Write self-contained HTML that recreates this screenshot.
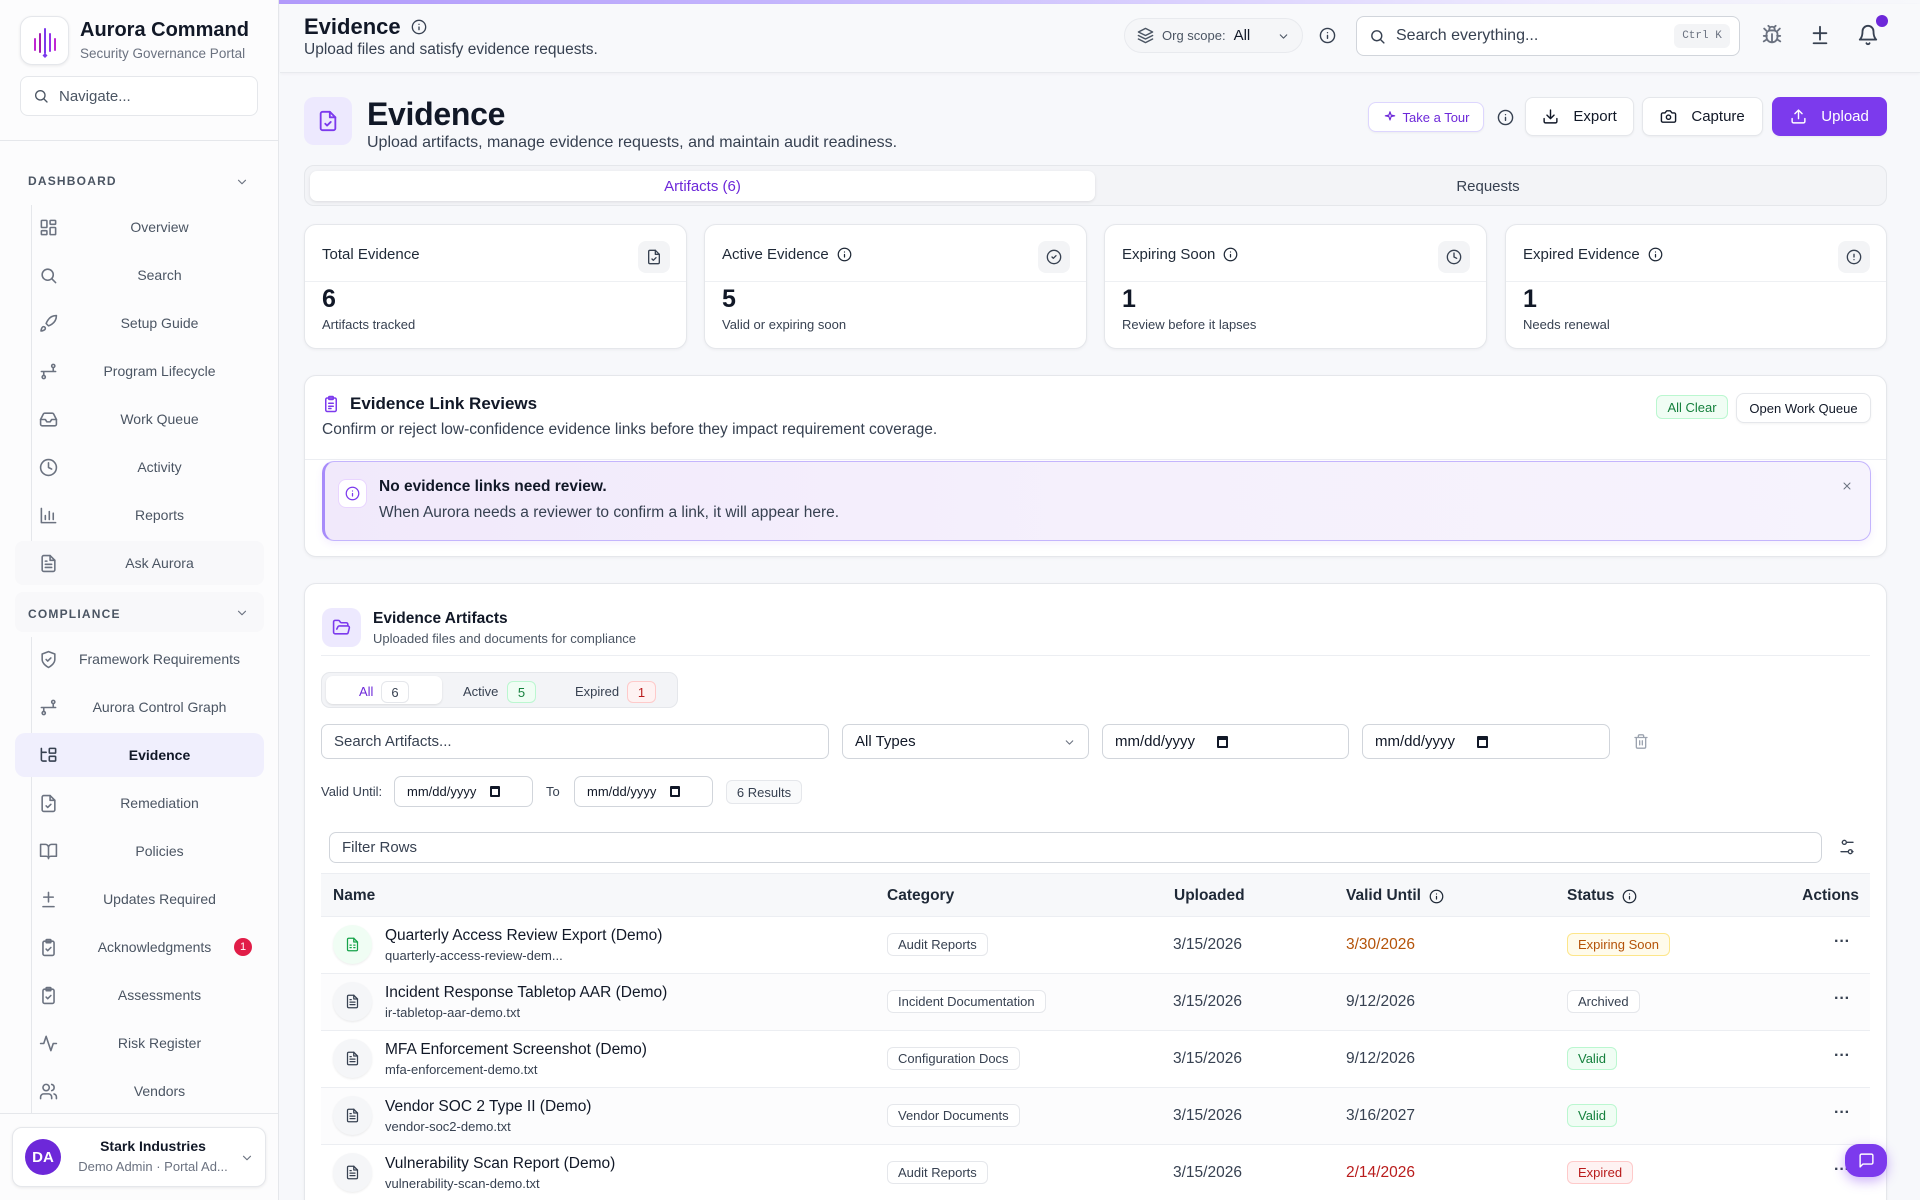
<!DOCTYPE html>
<html style="overflow:hidden;height:1200px"><head><meta charset="utf-8"><style>
*{box-sizing:border-box;margin:0;padding:0}
body{width:1920px;height:1200px;overflow:hidden;font-family:"Liberation Sans",sans-serif;color:#111827;background:#f7f8fb;position:relative}
.a{position:absolute}
svg{display:block}
.ic{fill:none;stroke:currentColor;stroke-width:2;stroke-linecap:round;stroke-linejoin:round}
.side{left:0;top:0;width:279px;height:1200px;background:#fcfcfd;border-right:1px solid #e5e7eb}
.nav{position:absolute;left:31px;width:233px;height:44px;display:flex;align-items:center;color:#4b5563;font-size:14px}
.nav svg{position:absolute;left:8px;width:19px;height:19px;color:#6b7280}
.nav span{width:100%;text-align:center;padding-left:24px}
.sec{position:absolute;left:28px;font-size:12px;letter-spacing:1.2px;color:#4b5563;font-weight:bold}
.card{position:absolute;background:#fff;border:1px solid #e5e7eb;border-radius:12px;box-shadow:0 1px 3px rgba(0,0,0,.05)}
.btn{position:absolute;background:#fff;border:1px solid #e5e7eb;border-radius:8px;display:flex;align-items:center;justify-content:center;gap:10px;font-size:15px;color:#111827;box-shadow:0 1px 2px rgba(0,0,0,.05)}
.stat .t{position:absolute;left:17px;top:21px;font-size:15px;color:#1f2937;display:flex;align-items:center;gap:8px}
.stat .ib{position:absolute;right:16px;top:16px;width:32px;height:32px;border-radius:8px;background:#f3f4f6;display:flex;align-items:center;justify-content:center;color:#374151}
.stat .hr{position:absolute;left:0;right:0;top:56px;border-top:1px solid #eef0f3}
.stat .n{position:absolute;left:17px;top:60px;font-size:25px;font-weight:bold}
.stat .s{position:absolute;left:17px;top:92px;font-size:13px;color:#374151}
.inp{position:absolute;background:#fff;border:1px solid #d1d5db;border-radius:7px;font-size:15px;color:#374151;display:flex;align-items:center;padding-left:12px}
.cal{display:inline-block;width:11px;height:12px;border:2px solid #111827;border-top-width:4px;border-radius:1px;margin-left:14px}
.badge{display:inline-block;border:1px solid #e5e7eb;border-radius:6px;padding:3px 10px;font-size:13px;background:#fff;color:#374151}
.row{position:absolute;left:321px;width:1549px;height:57px;border-top:1px solid #eceef2}
.row>div{position:absolute}
.fi{left:12px;top:8px;width:39px;height:39px;border-radius:50%;background:#f5f6f8;box-shadow:0 1px 2px rgba(0,0,0,.08);display:flex;align-items:center;justify-content:center;color:#374151}
.nm{left:64px;top:10px;font-size:15.5px;color:#111827}
.fn{left:64px;top:31px;font-size:13px;color:#374151}
.cat{left:566px;top:16px}
.up{left:852px;top:19px;font-size:15.5px;color:#374151}
.vu{left:1025px;top:19px;font-size:15.5px;color:#374151}
.st{left:1246px;top:16px}
.dots{left:1513px;top:20px;font-size:16px;font-weight:bold;color:#374151;line-height:10px}
.i{width:15px;height:15px}
</style></head><body>
<div class="a" style="left:0;top:0;width:1920px;height:4px;background:linear-gradient(90deg,#a78bfa,#c4b5fd 40%,#ede9fe 80%,#f7f8fb)"></div>

<!-- sidebar -->
<div class="a side">
 <div class="a" style="left:20px;top:16px;width:49px;height:49px;border:1px solid #e5e7eb;border-radius:12px;background:#fff;box-shadow:0 1px 3px rgba(0,0,0,.08)">
  <svg width="49" height="49" viewBox="0 0 49 49"><g stroke-linecap="round" stroke-width="2"><line x1="14" y1="22" x2="14" y2="33" stroke="#c026d3"/><line x1="19" y1="17" x2="19" y2="35" stroke="#a21caf"/><line x1="24" y1="12" x2="24" y2="36" stroke="#7c3aed"/><line x1="29" y1="17" x2="29" y2="34" stroke="#9333ea"/><line x1="34" y1="22" x2="34" y2="33" stroke="#c026d3"/></g><path d="M24 36l2.5 2.5-2.5 2.5-2.5-2.5z" fill="#7c3aed"/></svg>
 </div>
 <div class="a" style="left:80px;top:19px;font-size:20px;font-weight:bold;color:#111827">Aurora Command</div>
 <div class="a" style="left:80px;top:46px;font-size:13.5px;color:#6b7280">Security Governance Portal</div>
 <div class="a" style="left:20px;top:76px;width:238px;height:40px;border:1px solid #e5e7eb;border-radius:8px;background:#fff;display:flex;align-items:center;padding-left:12px;gap:10px;font-size:15px;color:#4b5563">
  <svg class="ic" width="16" height="16" viewBox="0 0 24 24"><circle cx="11" cy="11" r="7"/><path d="M21 21l-4.3-4.3"/></svg>Navigate...</div>
 <div class="a" style="left:0;top:140px;width:278px;border-top:1px solid #e5e7eb"></div>
 <div class="sec" style="top:174px">DASHBOARD</div>
 <svg class="a ic" style="left:235px;top:175px;color:#6b7280" width="14" height="14" viewBox="0 0 24 24"><path d="M6 9l6 6 6-6"/></svg>
 <div class="a" style="left:31px;top:205px;height:340px;border-left:1px solid #e5e7eb"></div>
 <div class="nav" style="top:205px"><svg class="ic" viewBox="0 0 24 24"><rect x="3" y="3" width="7" height="9" rx="1"/><rect x="14" y="3" width="7" height="5" rx="1"/><rect x="14" y="12" width="7" height="9" rx="1"/><rect x="3" y="16" width="7" height="5" rx="1"/></svg><span>Overview</span></div>
 <div class="nav" style="top:253px"><svg class="ic" viewBox="0 0 24 24"><circle cx="11" cy="11" r="7"/><path d="M21 21l-4.3-4.3"/></svg><span>Search</span></div>
 <div class="nav" style="top:301px"><svg class="ic" viewBox="0 0 24 24"><path d="M4.5 16.5c-1.5 1.3-2 5-2 5s3.7-.5 5-2c.7-.8.7-2.1-.1-2.9-.8-.8-2.1-.8-2.9-.1zM12 15l-3-3a22 22 0 0 1 2-3.9A12.9 12.9 0 0 1 22 2c0 2.7-.8 7.5-6 11a22 22 0 0 1-4 2z"/></svg><span>Setup Guide</span></div>
 <div class="nav" style="top:349px"><svg class="ic" viewBox="0 0 24 24"><circle cx="6" cy="19" r="2"/><circle cx="18" cy="5" r="2"/><path d="M6 17V12h12V7M3 12h18"/></svg><span>Program Lifecycle</span></div>
 <div class="nav" style="top:397px"><svg class="ic" viewBox="0 0 24 24"><path d="M22 12h-6l-2 3h-4l-2-3H2"/><path d="M5.5 5.1L2 12v6a2 2 0 0 0 2 2h16a2 2 0 0 0 2-2v-6l-3.5-6.9A2 2 0 0 0 16.8 4H7.2a2 2 0 0 0-1.7 1.1z"/></svg><span>Work Queue</span></div>
 <div class="nav" style="top:445px"><svg class="ic" viewBox="0 0 24 24"><circle cx="12" cy="12" r="10"/><path d="M12 6v6l4 2"/></svg><span>Activity</span></div>
 <div class="nav" style="top:493px"><svg class="ic" viewBox="0 0 24 24"><path d="M3 3v18h18M8 17v-5M13 17V7M18 17v-8"/></svg><span>Reports</span></div>
 <div class="nav" style="top:541px;left:15px;width:249px;background:#f8f8fa;border-radius:8px"><svg class="ic" style="left:24px" viewBox="0 0 24 24"><path d="M14 2H6a2 2 0 0 0-2 2v16a2 2 0 0 0 2 2h12a2 2 0 0 0 2-2V8z"/><path d="M14 2v6h6M8 13h8M8 17h8M8 9h2"/></svg><span style="padding-left:40px">Ask Aurora</span></div>
 <div class="a" style="left:15px;top:592px;width:249px;height:40px;background:#f8f8fa;border-radius:8px"></div>
 <div class="sec" style="top:607px">COMPLIANCE</div>
 <svg class="a ic" style="left:235px;top:606px;color:#6b7280" width="14" height="14" viewBox="0 0 24 24"><path d="M6 9l6 6 6-6"/></svg>
 <div class="a" style="left:31px;top:637px;height:478px;border-left:1px solid #e5e7eb"></div>
 <div class="nav" style="top:637px"><svg class="ic" viewBox="0 0 24 24"><path d="M12 22s8-4 8-10V5l-8-3-8 3v7c0 6 8 10 8 10z"/><path d="M9 12l2 2 4-4"/></svg><span>Framework Requirements</span></div>
 <div class="nav" style="top:685px"><svg class="ic" viewBox="0 0 24 24"><circle cx="6" cy="19" r="2"/><circle cx="18" cy="5" r="2"/><path d="M6 17V12h12V7M3 12h18"/></svg><span>Aurora Control Graph</span></div>
 <div class="nav" style="top:733px;left:15px;width:249px;background:#f0effd;border-radius:10px;color:#111827;font-weight:bold"><svg class="ic" style="left:24px;color:#374151" viewBox="0 0 24 24"><path d="M3 3v14a2 2 0 0 0 2 2h4M3 8h6"/><rect x="13" y="3" width="8" height="6" rx="1"/><rect x="13" y="13" width="8" height="6" rx="1"/></svg><span style="padding-left:40px">Evidence</span></div>
 <div class="nav" style="top:781px"><svg class="ic" viewBox="0 0 24 24"><path d="M14 2H6a2 2 0 0 0-2 2v16a2 2 0 0 0 2 2h12a2 2 0 0 0 2-2V8z"/><path d="M14 2v6h6M9 15l2 2 4-4"/></svg><span>Remediation</span></div>
 <div class="nav" style="top:829px"><svg class="ic" viewBox="0 0 24 24"><path d="M2 3h6a4 4 0 0 1 4 4v14a3 3 0 0 0-3-3H2zM22 3h-6a4 4 0 0 0-4 4v14a3 3 0 0 1 3-3h7z"/></svg><span>Policies</span></div>
 <div class="nav" style="top:877px"><svg class="ic" viewBox="0 0 24 24"><path d="M12 3v12M6 9h12M5 21h14"/></svg><span>Updates Required</span></div>
 <div class="nav" style="top:925px"><svg class="ic" viewBox="0 0 24 24"><rect x="5" y="4" width="14" height="18" rx="2"/><rect x="9" y="2" width="6" height="4" rx="1"/><path d="M9 14l2 2 4-4"/></svg><span style="padding-right:10px">Acknowledgments</span><div class="a" style="right:12px;top:13px;width:18px;height:18px;border-radius:50%;background:#e11d48;color:#fff;font-size:11px;display:flex;align-items:center;justify-content:center">1</div></div>
 <div class="nav" style="top:973px"><svg class="ic" viewBox="0 0 24 24"><rect x="5" y="4" width="14" height="18" rx="2"/><rect x="9" y="2" width="6" height="4" rx="1"/><path d="M9 14l2 2 4-4"/></svg><span>Assessments</span></div>
 <div class="nav" style="top:1021px"><svg class="ic" viewBox="0 0 24 24"><path d="M22 12h-4l-3 9L9 3l-3 9H2"/></svg><span>Risk Register</span></div>
 <div class="nav" style="top:1069px"><svg class="ic" viewBox="0 0 24 24"><path d="M16 21v-2a4 4 0 0 0-4-4H6a4 4 0 0 0-4 4v2"/><circle cx="9" cy="7" r="4"/><path d="M22 21v-2a4 4 0 0 0-3-3.9M16 3.1a4 4 0 0 1 0 7.8"/></svg><span>Vendors</span></div>
 <div class="a" style="left:0;top:1113px;width:278px;height:87px;background:#fcfcfd;border-top:1px solid #e5e7eb"></div>
 <div class="a" style="left:12px;top:1127px;width:254px;height:60px;border:1px solid #e5e7eb;border-radius:10px;background:#fff;box-shadow:0 1px 3px rgba(0,0,0,.08)">
  <div class="a" style="left:12px;top:11px;width:36px;height:36px;border-radius:50%;background:#6d28d9;color:#fff;font-size:15px;font-weight:bold;display:flex;align-items:center;justify-content:center">DA</div>
  <div class="a" style="left:60px;top:10px;width:160px;text-align:center;font-size:14px;font-weight:bold">Stark Industries</div>
  <div class="a" style="left:60px;top:31px;width:160px;text-align:center;font-size:13px;color:#6b7280">Demo Admin · Portal Ad...</div>
  <svg class="a ic" style="left:227px;top:23px;color:#6b7280" width="14" height="14" viewBox="0 0 24 24"><path d="M6 9l6 6 6-6"/></svg>
 </div>
</div>

<!-- top header -->
<div class="a" style="left:280px;top:4px;width:1640px;height:69px;background:#f8f9fb;border-bottom:1px solid #e8eaee;box-shadow:0 1px 3px rgba(0,0,0,.04)"></div>
<div class="a" style="left:304px;top:14px;font-size:22px;font-weight:bold;display:flex;align-items:center;gap:10px">Evidence<svg class="ic" width="16" height="16" viewBox="0 0 24 24" style="color:#374151"><circle cx="12" cy="12" r="10"/><path d="M12 16v-4M12 8h.01"/></svg></div>
<div class="a" style="left:304px;top:41px;font-size:15.5px;color:#374151">Upload files and satisfy evidence requests.</div>
<div class="a" style="left:1124px;top:18px;width:179px;height:35px;border:1px solid #e8eaee;border-radius:18px;background:#f5f6f8;display:flex;align-items:center;padding-left:12px;gap:8px;font-size:13px;color:#4b5563">
 <svg class="ic" width="17" height="17" viewBox="0 0 24 24"><path d="M12 2L2 7l10 5 10-5-10-5zM2 17l10 5 10-5M2 12l10 5 10-5"/></svg>Org scope:<span style="font-size:15px;color:#111827">All</span>
 <svg class="ic a" style="right:12px;top:11px" width="13" height="13" viewBox="0 0 24 24"><path d="M6 9l6 6 6-6"/></svg></div>
<svg class="a ic" style="left:1319px;top:27px;color:#374151" width="17" height="17" viewBox="0 0 24 24"><circle cx="12" cy="12" r="10"/><path d="M12 16v-4M12 8h.01"/></svg>
<div class="a" style="left:1356px;top:16px;width:384px;height:40px;border:1px solid #d1d5db;border-radius:8px;background:#fff;display:flex;align-items:center;padding-left:12px;gap:10px;font-size:16px;color:#374151">
 <svg class="ic" width="17" height="17" viewBox="0 0 24 24"><circle cx="11" cy="11" r="7"/><path d="M21 21l-4.3-4.3"/></svg>Search everything...
 <div class="a" style="right:9px;top:7px;width:56px;height:24px;border-radius:6px;background:#f3f4f6;font-family:'Liberation Mono',monospace;font-size:11px;color:#6b7280;display:flex;align-items:center;justify-content:center">Ctrl K</div></div>
<svg class="a ic" style="left:1761px;top:24px;color:#6b7280" width="22" height="22" viewBox="0 0 24 24"><path d="M8 2l1.9 1.9M16 2l-1.9 1.9M9 7.1V6a3 3 0 1 1 6 0v1.1"/><path d="M12 20c-3.3 0-6-2.7-6-6v-3a4 4 0 0 1 4-4h4a4 4 0 0 1 4 4v3c0 3.3-2.7 6-6 6zM12 20v-9M6.5 13H3M21 13h-3.5M6 7.5L3.5 5M18 7.5L20.5 5M6 17l-3 2M18 17l3 2"/></svg>
<svg class="a ic" style="left:1809px;top:24px;color:#374151" width="22" height="22" viewBox="0 0 24 24"><path d="M12 3v14M5 10h14M5 21h14"/></svg>
<svg class="a ic" style="left:1857px;top:24px;color:#374151" width="22" height="22" viewBox="0 0 24 24"><path d="M6 8a6 6 0 0 1 12 0c0 7 3 9 3 9H3s3-2 3-9M10.3 21a1.9 1.9 0 0 0 3.4 0"/></svg>
<div class="a" style="left:1876px;top:15px;width:12px;height:12px;border-radius:50%;background:#6d28d9"></div>

<!-- page header -->
<div class="a" style="left:304px;top:97px;width:48px;height:48px;border-radius:10px;background:#ede9fe;display:flex;align-items:center;justify-content:center;color:#7c3aed"><svg class="ic" width="22" height="22" viewBox="0 0 24 24"><path d="M14 2H6a2 2 0 0 0-2 2v16a2 2 0 0 0 2 2h12a2 2 0 0 0 2-2V8z"/><path d="M14 2v6h6M9 15l2 2 4-4"/></svg></div>
<div class="a" style="left:367px;top:96px;font-size:32px;font-weight:bold;letter-spacing:-.3px">Evidence</div>
<div class="a" style="left:367px;top:134px;font-size:16px;color:#374151">Upload artifacts, manage evidence requests, and maintain audit readiness.</div>
<div class="btn" style="left:1368px;top:102px;width:116px;height:30px;font-size:13px;color:#6d28d9;gap:6px;border-color:#ddd6fe"><svg class="ic" width="14" height="14" viewBox="0 0 24 24"><path d="M12 3l1.9 5.8L20 10l-6.1 1.2L12 17l-1.9-5.8L4 10l6.1-1.2z"/></svg>Take a Tour</div>
<svg class="a ic" style="left:1497px;top:109px;color:#374151" width="17" height="17" viewBox="0 0 24 24"><circle cx="12" cy="12" r="10"/><path d="M12 16v-4M12 8h.01"/></svg>
<div class="btn" style="left:1525px;top:97px;width:109px;height:39px"><svg class="ic" width="17" height="17" viewBox="0 0 24 24"><path d="M21 15v4a2 2 0 0 1-2 2H5a2 2 0 0 1-2-2v-4M7 10l5 5 5-5M12 15V3"/></svg>&nbsp;Export</div>
<div class="btn" style="left:1642px;top:97px;width:121px;height:39px"><svg class="ic" width="17" height="17" viewBox="0 0 24 24"><path d="M14.5 4h-5L7 7H4a2 2 0 0 0-2 2v9a2 2 0 0 0 2 2h16a2 2 0 0 0 2-2V9a2 2 0 0 0-2-2h-3z"/><circle cx="12" cy="13" r="3"/></svg>&nbsp;Capture</div>
<div class="btn" style="left:1772px;top:97px;width:115px;height:39px;background:#7c3aed;border-color:#7c3aed;color:#fff"><svg class="ic" width="17" height="17" viewBox="0 0 24 24"><path d="M21 15v4a2 2 0 0 1-2 2H5a2 2 0 0 1-2-2v-4M17 8l-5-5-5 5M12 3v12"/></svg>&nbsp;Upload</div>

<!-- tabs -->
<div class="a" style="left:304px;top:165px;width:1583px;height:41px;border:1px solid #e5e7eb;border-radius:10px;background:#f3f4f7"></div>
<div class="a" style="left:310px;top:171px;width:785px;height:30px;border-radius:7px;background:#fff;box-shadow:0 1px 3px rgba(0,0,0,.1);display:flex;align-items:center;justify-content:center;font-size:15px;color:#6d28d9">Artifacts (6)</div>
<div class="a" style="left:1095px;top:171px;width:786px;height:30px;display:flex;align-items:center;justify-content:center;font-size:15px;color:#374151">Requests</div>

<!-- stats -->
<div class="card stat" style="left:304px;top:224px;width:383px;height:125px"><div class="t">Total Evidence</div><div class="ib"><svg class="ic" width="16" height="16" viewBox="0 0 24 24"><path d="M14 2H6a2 2 0 0 0-2 2v16a2 2 0 0 0 2 2h12a2 2 0 0 0 2-2V8z"/><path d="M14 2v6h6M9 15l2 2 4-4"/></svg></div><div class="hr"></div><div class="n">6</div><div class="s">Artifacts tracked</div></div>
<div class="card stat" style="left:704px;top:224px;width:383px;height:125px"><div class="t">Active Evidence <svg class="ic i" viewBox="0 0 24 24"><circle cx="12" cy="12" r="10"/><path d="M12 16v-4M12 8h.01"/></svg></div><div class="ib"><svg class="ic" width="16" height="16" viewBox="0 0 24 24"><circle cx="12" cy="12" r="10"/><path d="M9 12l2 2 4-4"/></svg></div><div class="hr"></div><div class="n">5</div><div class="s">Valid or expiring soon</div></div>
<div class="card stat" style="left:1104px;top:224px;width:383px;height:125px"><div class="t">Expiring Soon <svg class="ic i" viewBox="0 0 24 24"><circle cx="12" cy="12" r="10"/><path d="M12 16v-4M12 8h.01"/></svg></div><div class="ib"><svg class="ic" width="16" height="16" viewBox="0 0 24 24"><circle cx="12" cy="12" r="10"/><path d="M12 6v6l4 2"/></svg></div><div class="hr"></div><div class="n">1</div><div class="s">Review before it lapses</div></div>
<div class="card stat" style="left:1505px;top:224px;width:382px;height:125px"><div class="t">Expired Evidence <svg class="ic i" viewBox="0 0 24 24"><circle cx="12" cy="12" r="10"/><path d="M12 16v-4M12 8h.01"/></svg></div><div class="ib"><svg class="ic" width="16" height="16" viewBox="0 0 24 24"><circle cx="12" cy="12" r="10"/><path d="M12 8v4M12 16h.01"/></svg></div><div class="hr"></div><div class="n">1</div><div class="s">Needs renewal</div></div>

<!-- link reviews -->
<div class="card" style="left:304px;top:375px;width:1583px;height:182px">
 <div class="a" style="left:17px;top:18px;display:flex;align-items:center;gap:10px;font-size:17px;font-weight:bold;color:#111827"><svg class="ic" style="color:#7c3aed" width="18" height="18" viewBox="0 0 24 24"><rect x="5" y="4" width="14" height="18" rx="2"/><rect x="9" y="2" width="6" height="4" rx="1"/><path d="M9 11h6M9 15h6M9 18h3"/></svg>Evidence Link Reviews</div>
 <div class="a" style="left:17px;top:45px;font-size:15.5px;color:#374151">Confirm or reject low-confidence evidence links before they impact requirement coverage.</div>
 <div class="a" style="left:1351px;top:19px;width:72px;height:24px;border:1px solid #bbf7d0;background:#f0fdf4;border-radius:6px;font-size:13px;color:#15803d;display:flex;align-items:center;justify-content:center">All Clear</div>
 <div class="btn" style="left:1431px;top:17px;width:135px;height:30px;font-size:13px">Open Work Queue</div>
 <div class="a" style="left:0;top:83px;width:1581px;border-top:1px solid #eceef2"></div>
 <div class="a" style="left:17px;top:85px;width:1549px;height:80px;border:1px solid #c4b5fd;border-left:3px solid #a78bfa;border-radius:12px;background:linear-gradient(90deg,#f1e9fb,#f5f0fc 50%,#f6f3fd);box-shadow:0 3px 8px rgba(124,58,237,.08)">
  <div class="a" style="left:13px;top:17px;width:29px;height:29px;border-radius:8px;background:#fff;border:1px solid #e9d5ff;display:flex;align-items:center;justify-content:center;color:#7c3aed"><svg class="ic" width="15" height="15" viewBox="0 0 24 24"><circle cx="12" cy="12" r="10"/><path d="M12 16v-4M12 8h.01"/></svg></div>
  <div class="a" style="left:54px;top:16px;font-size:15.5px;font-weight:bold;color:#111827">No evidence links need review.</div>
  <div class="a" style="left:54px;top:42px;font-size:15.5px;color:#374151">When Aurora needs a reviewer to confirm a link, it will appear here.</div>
  <svg class="a ic" style="left:1516px;top:18px;color:#6b7280" width="12" height="12" viewBox="0 0 24 24"><path d="M18 6L6 18M6 6l12 12"/></svg>
 </div>
</div>

<!-- artifacts -->
<div class="card" style="left:304px;top:583px;width:1583px;height:630px"></div>
<div class="a" style="left:322px;top:608px;width:39px;height:39px;border-radius:10px;background:#ede9fe;display:flex;align-items:center;justify-content:center;color:#7c3aed"><svg class="ic" width="19" height="19" viewBox="0 0 24 24"><path d="M6 14l1.5-2.9A2 2 0 0 1 9.2 10H20a2 2 0 0 1 1.9 2.5l-1.5 6A2 2 0 0 1 18.5 20H4a2 2 0 0 1-2-2V5a2 2 0 0 1 2-2h3.9a2 2 0 0 1 1.7.9l.8 1.2a2 2 0 0 0 1.7.9H18a2 2 0 0 1 2 2v2"/></svg></div>
<div class="a" style="left:373px;top:610px;font-size:15.5px;font-weight:bold">Evidence Artifacts</div>
<div class="a" style="left:373px;top:631px;font-size:13px;color:#4b5563">Uploaded files and documents for compliance</div>
<div class="a" style="left:321px;top:655px;width:1549px;border-top:1px solid #eceef2"></div>

<div class="a" style="left:321px;top:672px;width:357px;height:36px;border:1px solid #e5e7eb;border-radius:9px;background:#f3f4f7"></div>
<div class="a" style="left:326px;top:676px;width:116px;height:28px;border-radius:7px;background:#fff;box-shadow:0 1px 2px rgba(0,0,0,.1)"></div>
<div class="a" style="left:359px;top:684px;font-size:13px;color:#6d28d9">All</div><div class="a" style="left:381px;top:681px;width:28px;height:22px;border:1px solid #e5e7eb;border-radius:6px;font-size:13px;display:flex;align-items:center;justify-content:center;color:#374151">6</div>
<div class="a" style="left:463px;top:684px;font-size:13px;color:#374151">Active</div><div class="a" style="left:507px;top:681px;width:29px;height:22px;border:1px solid #bbf7d0;background:#f0fdf4;border-radius:6px;font-size:13px;display:flex;align-items:center;justify-content:center;color:#15803d">5</div>
<div class="a" style="left:575px;top:684px;font-size:13px;color:#374151">Expired</div><div class="a" style="left:627px;top:681px;width:29px;height:22px;border:1px solid #fecaca;background:#fef2f2;border-radius:6px;font-size:13px;display:flex;align-items:center;justify-content:center;color:#b91c1c">1</div>

<div class="inp" style="left:321px;top:724px;width:508px;height:35px">Search Artifacts...</div>
<div class="inp" style="left:842px;top:724px;width:247px;height:35px;color:#111827">All Types<svg class="ic a" style="right:12px;top:11px;color:#6b7280" width="13" height="13" viewBox="0 0 24 24"><path d="M6 9l6 6 6-6"/></svg></div>
<div class="inp" style="left:1102px;top:724px;width:247px;height:35px;color:#111827">mm/dd/yyyy<span class="cal" style="margin-left:22px"></span></div>
<div class="inp" style="left:1362px;top:724px;width:248px;height:35px;color:#111827">mm/dd/yyyy<span class="cal" style="margin-left:22px"></span></div>
<svg class="a ic" style="left:1633px;top:733px;color:#9ca3af" width="16" height="17" viewBox="0 0 24 24"><path d="M3 6h18M19 6v14a2 2 0 0 1-2 2H7a2 2 0 0 1-2-2V6M8 6V4a2 2 0 0 1 2-2h4a2 2 0 0 1 2 2v2M10 11v6M14 11v6"/></svg>

<div class="a" style="left:321px;top:784px;font-size:13px;color:#374151">Valid Until:</div>
<div class="inp" style="left:394px;top:776px;width:139px;height:31px;font-size:13px;color:#111827">mm/dd/yyyy<span class="cal" style="width:10px;height:11px;border-top-width:3px"></span></div>
<div class="a" style="left:546px;top:784px;font-size:13px;color:#374151">To</div>
<div class="inp" style="left:574px;top:776px;width:139px;height:31px;font-size:13px;color:#111827">mm/dd/yyyy<span class="cal" style="width:10px;height:11px;border-top-width:3px"></span></div>
<div class="a" style="left:726px;top:780px;width:76px;height:24px;border:1px solid #e5e7eb;background:#f9fafb;border-radius:6px;font-size:13px;color:#374151;display:flex;align-items:center;justify-content:center">6 Results</div>

<div class="inp" style="left:329px;top:832px;width:1493px;height:31px">Filter Rows</div>
<svg class="a ic" style="left:1839px;top:839px;color:#374151" width="16" height="16" viewBox="0 0 24 24"><path d="M21 5h-9M14 19H3M5 5h0M21 19h-2"/><circle cx="8" cy="5" r="3"/><circle cx="17" cy="19" r="3"/></svg>

<div class="a" style="left:321px;top:873px;width:1549px;height:44px;background:#f7f8fa;border-top:1px solid #eceef2"></div>
<div class="a" style="left:333px;top:887px;font-size:15.5px;font-weight:bold;color:#1f2937">Name</div>
<div class="a" style="left:887px;top:887px;font-size:15.5px;font-weight:bold;color:#1f2937">Category</div>
<div class="a" style="left:1174px;top:887px;font-size:15.5px;font-weight:bold;color:#1f2937">Uploaded</div>
<div class="a" style="left:1346px;top:887px;font-size:15.5px;font-weight:bold;color:#1f2937;display:flex;gap:8px;align-items:center">Valid Until <svg class="ic i" viewBox="0 0 24 24"><circle cx="12" cy="12" r="10"/><path d="M12 16v-4M12 8h.01"/></svg></div>
<div class="a" style="left:1567px;top:887px;font-size:15.5px;font-weight:bold;color:#1f2937;display:flex;gap:8px;align-items:center">Status <svg class="ic i" viewBox="0 0 24 24"><circle cx="12" cy="12" r="10"/><path d="M12 16v-4M12 8h.01"/></svg></div>
<div class="a" style="left:1790px;top:887px;width:69px;text-align:right;font-size:15.5px;font-weight:bold;color:#1f2937">Actions</div>

<div class="row" style="top:916px"><div class="fi" style="background:#f0fdf4;color:#16a34a"><svg class="ic" width="15" height="15" viewBox="0 0 24 24"><path d="M14 2H6a2 2 0 0 0-2 2v16a2 2 0 0 0 2 2h12a2 2 0 0 0 2-2V8z"/><path d="M14 2v6h6M8 13h2M14 13h2M8 17h2M14 17h2"/></svg></div><div class="nm">Quarterly Access Review Export (Demo)</div><div class="fn">quarterly-access-review-dem...</div><div class="cat"><span class="badge">Audit Reports</span></div><div class="up">3/15/2026</div><div class="vu" style="color:#b45309">3/30/2026</div><div class="st"><span class="badge" style="background:#fffbeb;border-color:#fde68a;color:#b45309">Expiring Soon</span></div><div class="dots">···</div></div>
<div class="row" style="top:973px;background:#fcfcfd"><div class="fi"><svg class="ic" width="15" height="15" viewBox="0 0 24 24"><path d="M14 2H6a2 2 0 0 0-2 2v16a2 2 0 0 0 2 2h12a2 2 0 0 0 2-2V8z"/><path d="M14 2v6h6M8 13h8M8 17h8M8 9h2"/></svg></div><div class="nm">Incident Response Tabletop AAR (Demo)</div><div class="fn">ir-tabletop-aar-demo.txt</div><div class="cat"><span class="badge">Incident Documentation</span></div><div class="up">3/15/2026</div><div class="vu">9/12/2026</div><div class="st"><span class="badge">Archived</span></div><div class="dots">···</div></div>
<div class="row" style="top:1030px"><div class="fi"><svg class="ic" width="15" height="15" viewBox="0 0 24 24"><path d="M14 2H6a2 2 0 0 0-2 2v16a2 2 0 0 0 2 2h12a2 2 0 0 0 2-2V8z"/><path d="M14 2v6h6M8 13h8M8 17h8M8 9h2"/></svg></div><div class="nm">MFA Enforcement Screenshot (Demo)</div><div class="fn">mfa-enforcement-demo.txt</div><div class="cat"><span class="badge">Configuration Docs</span></div><div class="up">3/15/2026</div><div class="vu">9/12/2026</div><div class="st"><span class="badge" style="background:#f0fdf4;border-color:#bbf7d0;color:#15803d">Valid</span></div><div class="dots">···</div></div>
<div class="row" style="top:1087px;background:#fcfcfd"><div class="fi"><svg class="ic" width="15" height="15" viewBox="0 0 24 24"><path d="M14 2H6a2 2 0 0 0-2 2v16a2 2 0 0 0 2 2h12a2 2 0 0 0 2-2V8z"/><path d="M14 2v6h6M8 13h8M8 17h8M8 9h2"/></svg></div><div class="nm">Vendor SOC 2 Type II (Demo)</div><div class="fn">vendor-soc2-demo.txt</div><div class="cat"><span class="badge">Vendor Documents</span></div><div class="up">3/15/2026</div><div class="vu">3/16/2027</div><div class="st"><span class="badge" style="background:#f0fdf4;border-color:#bbf7d0;color:#15803d">Valid</span></div><div class="dots">···</div></div>
<div class="row" style="top:1144px"><div class="fi"><svg class="ic" width="15" height="15" viewBox="0 0 24 24"><path d="M14 2H6a2 2 0 0 0-2 2v16a2 2 0 0 0 2 2h12a2 2 0 0 0 2-2V8z"/><path d="M14 2v6h6M8 13h8M8 17h8M8 9h2"/></svg></div><div class="nm">Vulnerability Scan Report (Demo)</div><div class="fn">vulnerability-scan-demo.txt</div><div class="cat"><span class="badge">Audit Reports</span></div><div class="up">3/15/2026</div><div class="vu" style="color:#b91c1c">2/14/2026</div><div class="st"><span class="badge" style="background:#fef2f2;border-color:#fecaca;color:#b91c1c">Expired</span></div><div class="dots">···</div></div>

<div class="a" style="left:1845px;top:1144px;width:42px;height:33px;border-radius:14px;background:#7c3aed;box-shadow:0 4px 12px rgba(124,58,237,.4);display:flex;align-items:center;justify-content:center;color:#fff"><svg class="ic" width="17" height="17" viewBox="0 0 24 24"><path d="M21 15a2 2 0 0 1-2 2H7l-4 4V5a2 2 0 0 1 2-2h14a2 2 0 0 1 2 2z"/></svg></div>
</body></html>
